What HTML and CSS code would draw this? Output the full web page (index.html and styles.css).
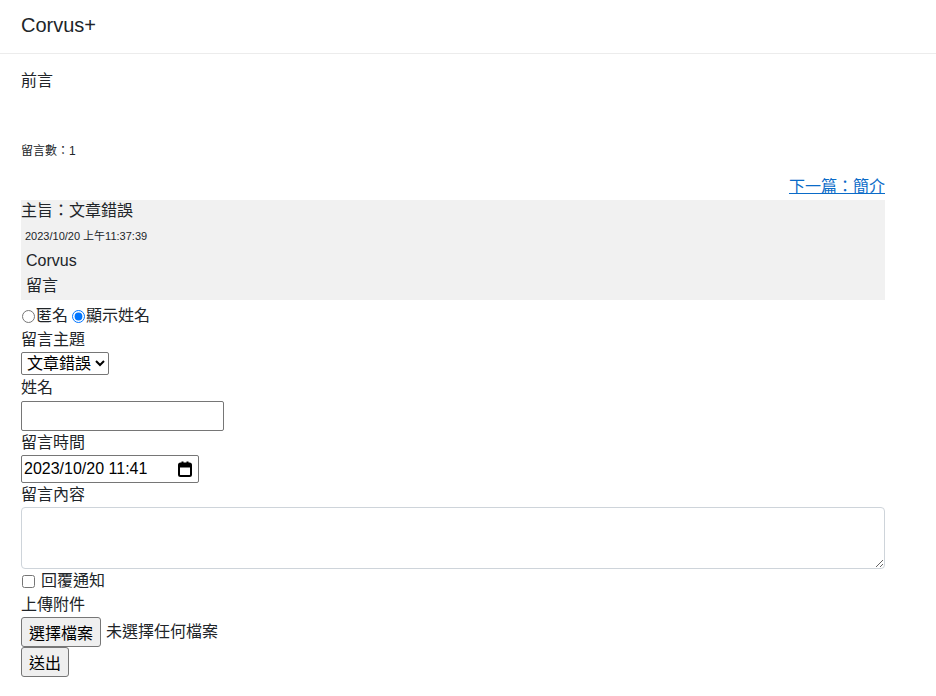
FILE: index.html
```html
<!DOCTYPE html>
<html lang="zh-Hant">

<head>
    <meta charset="UTF-8">
    <meta name="viewport" content="width=device-width, initial-scale=1.0">
    <title>Corvus+</title>
    <link rel="stylesheet" href="styles.css">
</head>

<body>
    <header class="navbar">
        <a class="brand" href="#">Corvus+</a>
    </header>
    <main class="page">
        <p class="intro">前言</p>
        <p class="count">留言數：1</p>
        <div class="next-row">
            <a class="next-link" href="#">下一篇：簡介</a>
        </div>

        <div class="comment">
            <div class="comment-title">主旨：文章錯誤</div>
            <div class="comment-date">2023/10/20 上午11:37:39</div>
            <div class="comment-name">Corvus</div>
            <div class="comment-body">留言</div>
        </div>

        <form class="comment-form">
            <div class="radio-row">
                <label><input type="radio" name="show" value="anon">匿名</label>
                <label><input type="radio" name="show" value="name" checked>顯示姓名</label>
            </div>
            <label class="field-label" for="topic">留言主題</label>
            <div class="field"><select id="topic" class="select">
                    <option>文章錯誤</option>
                    <option>其他</option>
                </select></div>
            <label class="field-label" for="name">姓名</label>
            <div class="field"><input id="name" class="text-input" type="text"></div>
            <label class="field-label" for="time">留言時間</label>
            <div class="field">
                <span class="date-wrap">
                    <input id="time" class="date-input" type="text" value="2023/10/20 11:41">
                    <svg class="cal-icon" width="14" height="16" viewBox="0 0 14 16">
                        <rect x="1" y="2.5" width="12" height="12.5" rx="1.5" fill="none" stroke="#000" stroke-width="2" />
                        <rect x="1" y="2.5" width="12" height="4" fill="#000" />
                        <rect x="3.5" y="0.5" width="2" height="3" fill="#000" />
                        <rect x="8.5" y="0.5" width="2" height="3" fill="#000" />
                    </svg>
                </span>
            </div>
            <label class="field-label" for="content">留言內容</label>
            <div class="field"><textarea id="content" class="textarea"></textarea></div>
            <label class="check-row"><input type="checkbox">回覆通知</label>
            <div class="field-label">上傳附件</div>
            <div class="file-row">
                <button type="button" class="btn">選擇檔案</button>
                <span class="file-name">未選擇任何檔案</span>
            </div>
            <div><button type="submit" class="btn">送出</button></div>
        </form>
    </main>
</body>

</html>
```

FILE: styles.css
```css
body {
    font-family: "Liberation Sans", "Noto Sans CJK TC", sans-serif;
    font-size: 16px;
    line-height: 24px;
    margin: 0;
    color: #212529;
    background: #fff;
}

.navbar {
    padding: 10px 21px 13px;
    border-bottom: 1px solid #ececec;
}

.brand {
    font-size: 20px;
    line-height: 30px;
    color: #212529;
    text-decoration: none;
}

.page {
    width: 864px;
    margin-left: 21px;
}

.intro {
    margin: 15px 0 0;
}

.count {
    margin: 49px 0 0;
    font-size: 12px;
    line-height: 18px;
}

.next-row {
    margin-top: 15px;
    text-align: right;
    height: 25px;
}

.next-link {
    color: #0a6bc8;
}

.comment {
    background-color: #f1f1f1;
    height: 100px;
}

.comment-title {
    line-height: 22px;
}

.comment-date {
    font-size: 11px;
    line-height: 28px;
    padding-left: 4px;
}

.comment-name {
    line-height: 22px;
    padding-left: 5px;
}

.comment-body {
    line-height: 28px;
    padding-left: 5px;
}

.comment-form {
    display: flex;
    flex-direction: column;
}

.radio-row {
    margin-top: 4px;
    display: flex;
    height: 24px;
    align-items: center;
}

.radio-row input {
    margin: 0 1px 0 1px;
    width: 13px;
    height: 13px;
}

.radio-row label {
    display: flex;
    align-items: center;
    margin-right: 3px;
}

.field-label {
    display: block;
    height: 24px;
}

.field {
    display: block;
}

.select {
    width: 88px;
    height: 23px;
    font-family: inherit;
    font-size: 16px;
    color: #000;
    border: 1px solid #767676;
    border-radius: 2px;
    background: #fff;
    padding: 0 1px;
}

.text-input {
    box-sizing: border-box;
    width: 203px;
    height: 30px;
    border: 1px solid #767676;
    border-radius: 2px;
    margin: 1px 0 0;
    font-size: 16px;
}

.date-wrap {
    position: relative;
    display: inline-block;
}

.date-input {
    box-sizing: border-box;
    width: 178px;
    height: 28px;
    border: 1px solid #767676;
    border-radius: 2px;
    padding: 0 2px;
    font-family: inherit;
    font-size: 16px;
    color: #000;
    margin: 0;
    display: block;
}

.cal-icon {
    position: absolute;
    right: 7px;
    top: 6px;
}

.textarea {
    box-sizing: border-box;
    display: block;
    width: 864px;
    height: 62px;
    border: 1px solid #ced4da;
    border-radius: 4px;
    margin: 0;
    resize: vertical;
}

.check-row {
    display: flex;
    align-items: center;
    height: 24px;
}

.check-row input {
    margin: 0 6px 0 1px;
    width: 13px;
    height: 13px;
}

.file-row {
    display: flex;
    align-items: center;
}

.btn {
    height: 30px;
    padding: 0 7px;
    font-family: inherit;
    font-size: 16px;
    color: #000;
    background: #efefef;
    border: 1px solid #767676;
    border-radius: 3px;
}

.file-name {
    margin-left: 5px;
}
```
